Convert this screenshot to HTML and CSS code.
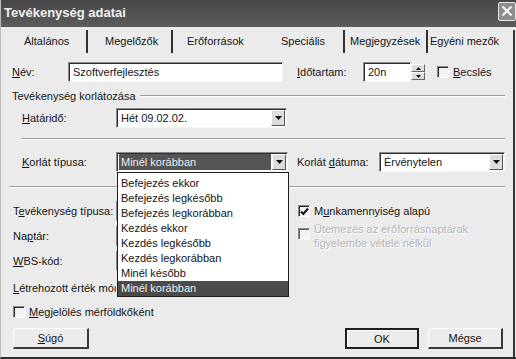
FILE: index.html
```html
<!DOCTYPE html>
<html lang="hu">
<head>
	<meta charset="utf-8">
	<title>Tevékenység adatai</title>
	<link rel="stylesheet" href="styles.css">
</head>
<body>
<div class="dialog">
	<div class="titlebar">
		<span class="title">Tevékenység adatai</span>
		<span class="close">
			<svg width="12" height="12" viewBox="0 0 12 12"><path d="M1.5 1.5L10.5 10.5M10.5 1.5L1.5 10.5" stroke="#f4f4f4" stroke-width="2.2"/></svg>
		</span>
	</div>

	<div class="content">
		<div class="tabs">
			<div class="tab t1">Általános</div>
			<div class="tab t2">Megelőzők</div>
			<div class="tab t3">Erőforrások</div>
			<div class="tab t4">Speciális</div>
			<div class="tab t5">Megjegyzések</div>
			<div class="tab t6">Egyéni mezők</div>
		</div>

		<div class="panel">
			<!-- név / időtartam -->
			<div class="row r-name">
				<span class="lbl w-name"><u>N</u>év:</span>
				<div class="field f-name">Szoftverfejlesztés</div>
				<span class="lbl w-dur"><u>I</u>dőtartam:</span>
				<div class="field f-dur">20n</div>
				<div class="spin">
					<span class="spin-btn"><svg width="5" height="3" viewBox="0 0 5 3"><path d="M0 3h5L2.5 0z" fill="#111"/></svg></span>
					<span class="spin-btn"><svg width="5" height="3" viewBox="0 0 5 3"><path d="M0 0h5L2.5 3z" fill="#111"/></svg></span>
				</div>
				<span class="check c-est"></span>
				<span class="chk-lbl"><u>B</u>ecslés</span>
			</div>

			<div class="group-head">
				<span>Tevékenység korlátozása</span>
				<span class="etch grow"></span>
			</div>

			<div class="row r-deadline">
				<span class="lbl w-sub"><u>H</u>atáridő:</span>
				<div class="field combo f-deadline">
					<span class="combo-text">Hét 09.02.02.</span>
					<span class="arrow"><svg width="7" height="4" viewBox="0 0 7 4"><path d="M0 0h7L3.5 4z" fill="#111"/></svg></span>
				</div>
			</div>

			<div class="etch sep1"></div>

			<div class="row r-constraint">
				<span class="lbl w-sub"><u>K</u>orlát típusa:</span>
				<div class="field combo f-type">
					<span class="combo-text selected">Minél korábban</span>
					<span class="arrow"><svg width="7" height="4" viewBox="0 0 7 4"><path d="M0 0h7L3.5 4z" fill="#111"/></svg></span>
				</div>
				<span class="lbl w-date">Korlát <u>d</u>átuma:</span>
				<div class="field combo f-date">
					<span class="combo-text">Érvénytelen</span>
					<span class="arrow"><svg width="7" height="4" viewBox="0 0 7 4"><path d="M0 0h7L3.5 4z" fill="#111"/></svg></span>
				</div>

				<ul class="droplist">
					<li>Befejezés ekkor</li>
					<li>Befejezés legkésőbb</li>
					<li>Befejezés legkorábban</li>
					<li>Kezdés ekkor</li>
					<li>Kezdés legkésőbb</li>
					<li>Kezdés legkorábban</li>
					<li>Minél később</li>
					<li class="hi">Minél korábban</li>
				</ul>
			</div>

			<div class="etch sep2"></div>

			<div class="lower">
				<div class="left-col">
					<div class="lrow h25"><span class="lbl w-low">T<u>e</u>vékenység típusa:</span><div class="field hidden-field"></div></div>
					<div class="lrow h25"><span class="lbl w-low">Na<u>p</u>tár:</span><div class="field hidden-field"></div></div>
					<div class="lrow h25"><span class="lbl w-low"><u>W</u>BS-kód:</span><div class="field hidden-field"></div></div>
					<div class="lrow h27"><span class="lbl w-low clip"><u>L</u>étrehozott érték módszere:</span></div>
				</div>
				<div class="right-col">
					<div class="crow c-work">
						<span class="check checked">
							<svg width="9" height="9" viewBox="0 0 9 9"><path d="M1 4.5L3.3 7L8 1.5" stroke="#111" stroke-width="2" fill="none"/></svg>
						</span>
						<span class="chk-lbl">M<u>u</u>nkamennyiség alapú</span>
					</div>
					<div class="crow c-sched">
						<span class="check dim"></span>
						<span class="chk-lbl disabled">Ütemezés az erőforrásnaptárak<br>figyelembe vétele nélkül</span>
					</div>
				</div>
			</div>

			<div class="row r-mile">
				<span class="check c-mile"></span>
				<span class="chk-lbl"><u>M</u>egjelölés mérföldkőként</span>
			</div>
		</div>

		<div class="buttons">
			<span class="btn b-help"><u>S</u>úgó</span>
			<span class="spacer"></span>
			<span class="btn b-ok">OK</span>
			<span class="btn b-cancel">Mégse</span>
		</div>
	</div>
</div>
</body>
</html>
```

FILE: styles.css
```css
* {
	margin: 0;
	padding: 0;
	box-sizing: border-box;
}

body {
	width: 516px;
	height: 359px;
	overflow: hidden;
	background: #ebebeb;
	font-family: "Liberation Sans", Arial, sans-serif;
	font-size: 11px;
	color: #141414;
}

u {
	text-decoration-thickness: 1px;
	text-underline-offset: 1px;
}

.dialog {
	width: 516px;
	height: 359px;
	background: #ebebeb;
	border-bottom: 2px solid #2e2e2e;
	border-left: 1px solid #bdbdbd;
}

/* title bar */
.titlebar {
	height: 27px;
	background: linear-gradient(#474747, #5c5c5c);
	display: flex;
	align-items: center;
	justify-content: space-between;
	padding-left: 3px;
}

.title {
	color: #f0f0f0;
	font-weight: bold;
	font-size: 13px;
	margin-top: -2px;
}

.close {
	width: 18px;
	height: 19px;
	margin-top: -5px;
	border: 1px solid #e6e6e6;
	border-radius: 2px;
	background: #8d8d8d;
	display: flex;
	align-items: center;
	justify-content: center;
}

.content {
	height: 330px;
	border-right: 2px solid #333;
	margin-right: 1px;
}

/* tabs */
.tabs {
	display: flex;
	height: 23px;
	margin-top: 3px;
}

.tab {
	height: 23px;
	line-height: 22px;
	white-space: nowrap;
	border-right: 2px solid #303030;
}

.t1 { width: 87px; padding-left: 23px; }
.t2 { width: 85px; padding-left: 17px; }
.t3 { width: 85px; padding-left: 14px; border-right: none; }
.t4 { width: 87px; padding-left: 23px; }
.t5 { width: 83px; padding-left: 5px; }
.t6 { width: 85px; padding-left: 2px; border-right: none; }

/* panel */
.panel {
	padding-right: 8px;
}

.row {
	display: flex;
	align-items: center;
	height: 20px;
	padding-left: 11px;
}

.lbl {
	white-space: nowrap;
	flex-shrink: 0;
}

.clip {
	overflow: hidden;
}

.field {
	height: 20px;
	background: #fff;
	border-top: 1px solid #8a8a8a;
	border-left: 1px solid #8a8a8a;
	border-right: 1px solid #f6f6f6;
	border-bottom: 1px solid #f6f6f6;
	box-shadow: inset 1px 1px 0 #2e2e2e;
	padding-left: 4px;
	display: flex;
	align-items: center;
	flex-shrink: 0;
}

.r-name { margin-top: 9px; }
.w-name { width: 56px; }
.f-name { width: 215px; }
.w-dur { width: 66px; margin-left: 14px; }
.f-dur { width: 48px; }

.spin {
	width: 14px;
	height: 20px;
	display: flex;
	flex-direction: column;
	padding: 2px 0;
}

.spin-btn {
	flex: 1;
	display: flex;
	align-items: center;
	justify-content: center;
	background: #dedede;
	border-top: 1px solid #fff;
	border-left: 1px solid #fff;
	border-right: 1px solid #666;
	border-bottom: 1px solid #666;
}

.check {
	width: 12px;
	height: 12px;
	flex-shrink: 0;
	background: #f3f3f3;
	border-top: 1px solid #8a8a8a;
	border-left: 1px solid #8a8a8a;
	border-right: 1px solid #fff;
	border-bottom: 1px solid #fff;
	box-shadow: inset 1px 1px 0 #262626;
	display: flex;
	align-items: center;
	justify-content: center;
}

.check.dim {
	box-shadow: inset 1px 1px 0 #5a5a5a;
}

.chk-lbl {
	margin-left: 4px;
	white-space: nowrap;
}

.c-est { margin-left: 12px; }

.group-head {
	display: flex;
	align-items: center;
	height: 14px;
	margin-top: 7px;
	padding-left: 11px;
}

.etch {
	height: 2px;
	border-top: 1px solid #9c9c9c;
	border-bottom: 1px solid #fff;
}

.grow {
	flex: 1;
	margin-left: 4px;
}

.r-deadline { margin-top: 5px; padding-left: 21px; }
.w-sub { width: 94px; }

.combo {
	padding: 1px 1px 1px 2px;
}

.combo-text {
	flex: 1;
	height: 100%;
	display: flex;
	align-items: center;
	padding-left: 2px;
	white-space: nowrap;
}

.combo-text.selected {
	background: #555;
	color: #ececec;
	margin-right: 1px;
}

.arrow {
	width: 14px;
	height: 100%;
	flex-shrink: 0;
	background: #dcdcdc;
	border-top: 1px solid #fff;
	border-left: 1px solid #fff;
	border-right: 1px solid #555;
	border-bottom: 1px solid #555;
	display: flex;
	align-items: center;
	justify-content: center;
}

.f-deadline { width: 171px; }

.sep1 { margin: 10px 0 0 20px; }

.r-constraint {
	margin-top: 12px;
	padding-left: 21px;
	position: relative;
}

.f-type { width: 172px; }
.w-date { width: 82px; margin-left: 9px; }
.f-date { width: 126px; }

/* open list of the constraint combo */
.droplist {
	position: absolute;
	left: 116px;
	top: 20px;
	width: 172px;
	height: 125px;
	list-style: none;
	background: #fff;
	border: 1px solid #1e1e1e;
	padding-top: 3px;
	z-index: 5;
}

.droplist li {
	height: 15px;
	line-height: 15px;
	padding-left: 3px;
	white-space: nowrap;
}

.droplist li.hi {
	background: #4b4b4b;
	color: #eee;
}

.sep2 { margin: 14px 0 0 8px; }

/* lower part */
.lower {
	display: flex;
	margin-top: 10px;
}

.left-col {
	width: 297px;
	padding-left: 12px;
}

.lrow {
	display: flex;
	align-items: center;
}

.h25 { height: 25px; }
.h27 { height: 27px; padding-top: 2px; }

.w-low { width: 103px; }

.hidden-field {
	width: 172px;
	height: 20px;
}

.right-col {
	flex: 1;
}

.crow {
	display: flex;
	align-items: center;
}

.c-work { margin-top: 6px; height: 14px; }
.c-sched { margin-top: 4px; align-items: flex-start; }
.c-sched .check { margin-top: 6px; }

.disabled {
	line-height: 14px;
	color: #b5b5b5;
	text-shadow: 1px 1px 0 #fff;
}

.r-mile {
	margin-top: 5px;
	height: 14px;
	padding-left: 12px;
}

/* buttons */
.buttons {
	display: flex;
	margin-top: 9px;
	padding: 0 10px 0 12px;
}

.spacer { flex: 1; }

.btn {
	height: 21px;
	display: flex;
	align-items: center;
	justify-content: center;
	background: #ececec;
	border-top: 1px solid #fff;
	border-left: 1px solid #fff;
	border-right: 2px solid #3a3a3a;
	border-bottom: 2px solid #3a3a3a;
}

.b-help { width: 76px; }

.b-ok {
	width: 74px;
	border: 2px solid #1e1e1e;
	box-shadow: inset 1px 1px 0 #fff;
}

.b-cancel { width: 75px; margin-left: 9px; }
```
